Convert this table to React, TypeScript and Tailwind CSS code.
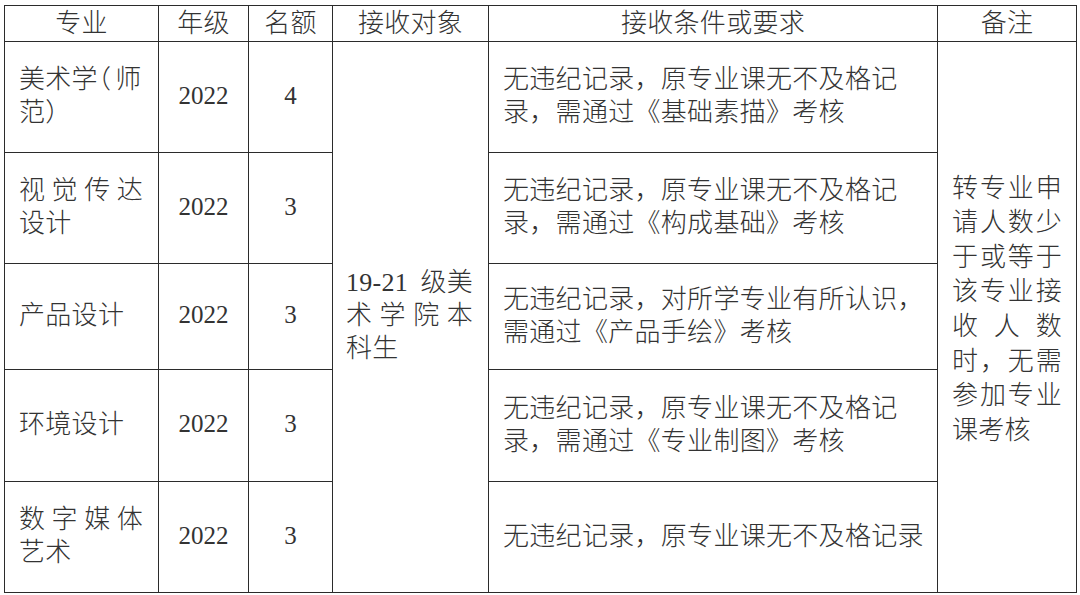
import React from "react";

type Ln = { t: string | string[]; j?: boolean };

const B = "border-r border-b border-[#2b2b2b]";

function Line({ l }: { l: Ln }) {
  if (l.j) {
    const toks = Array.isArray(l.t) ? l.t : Array.from(l.t);
    return (
      <div className="flex justify-between whitespace-nowrap">
        {toks.map((c, i) => (
          <span key={i}>{c}</span>
        ))}
      </div>
    );
  }
  return <div className="whitespace-nowrap">{Array.isArray(l.t) ? l.t.join("") : l.t}</div>;
}

function Lines({ lines }: { lines: Ln[] }) {
  return (
    <>
      {lines.map((l, i) => (
        <Line key={i} l={l} />
      ))}
    </>
  );
}

const rows: { major: React.ReactNode; year: string; n: string; cond: Ln[] }[] = [
  {
    major: (
      <>
        <div className="whitespace-nowrap">
          美术学<span className="[font-feature-settings:'halt'] mr-[4px]">（</span>师
        </div>
        <div className="whitespace-nowrap">范）</div>
      </>
    ),
    year: "2022",
    n: "4",
    cond: [{ t: "无违纪记录，原专业课无不及格记" }, { t: "录，需通过《基础素描》考核" }],
  },
  {
    major: <Lines lines={[{ t: "视觉传达", j: true }, { t: "设计" }]} />,
    year: "2022",
    n: "3",
    cond: [{ t: "无违纪记录，原专业课无不及格记" }, { t: "录，需通过《构成基础》考核" }],
  },
  {
    major: <Lines lines={[{ t: "产品设计" }]} />,
    year: "2022",
    n: "3",
    cond: [{ t: "无违纪记录，对所学专业有所认识，" }, { t: "需通过《产品手绘》考核" }],
  },
  {
    major: <Lines lines={[{ t: "环境设计" }]} />,
    year: "2022",
    n: "3",
    cond: [{ t: "无违纪记录，原专业课无不及格记" }, { t: "录，需通过《专业制图》考核" }],
  },
  {
    major: <Lines lines={[{ t: "数字媒体", j: true }, { t: "艺术" }]} />,
    year: "2022",
    n: "3",
    cond: [{ t: "无违纪记录，原专业课无不及格记录" }],
  },
];

const target: Ln[] = [{ t: ["19-21", "级美"], j: true }, { t: "术学院本", j: true }, { t: "科生" }];

const note: Ln[] = [
  { t: "转专业申", j: true },
  { t: "请人数少", j: true },
  { t: "于或等于", j: true },
  { t: "该专业接", j: true },
  { t: "收人数", j: true },
  { t: "时，无需", j: true },
  { t: "参加专业", j: true },
  { t: "课考核" },
];

const headers = ["专业", "年级", "名额", "接收对象", "接收条件或要求", "备注"];

export default function App() {
  return (
    <div className="w-[1080px] h-[595px] bg-white pt-[5px] pl-[4px] overflow-hidden text-[#333333] font-light text-[26px] leading-[33px] tracking-[0.3px] [font-family:'Liberation_Serif','Noto_Sans_CJK_SC',serif]">
      <div className="grid w-max grid-cols-[154px_90px_84px_156px_449px_139px] grid-rows-[36px_111px_111px_106px_112px_111px] border-l border-t border-[#2b2b2b]">
        {headers.map((h) => (
          <div key={h} className={`${B} flex items-center justify-center`}>
            {h}
          </div>
        ))}
        {rows.map((r, i) => (
          <React.Fragment key={i}>
            <div className={`${B} flex flex-col justify-center pl-[14px] pr-[15px] pb-[3px]`}>{r.major}</div>
            <div className={`${B} flex items-center justify-center pb-[4px] text-[25px] tracking-normal`}>{r.year}</div>
            <div className={`${B} flex items-center justify-center pb-[4px] text-[25px] tracking-normal`}>{r.n}</div>
            {i === 0 && (
              <div className={`${B} row-span-5 flex flex-col justify-center pl-[13px] pr-[15px] pb-[4px]`}>
                <Lines lines={target} />
              </div>
            )}
            <div className={`${B} flex flex-col justify-center pl-[14px] pb-[2px]`}>
              <Lines lines={r.cond} />
            </div>
            {i === 0 && (
              <div className={`${B} row-span-5 flex flex-col justify-center pl-[14px] pr-[14px] pb-[14px] leading-[34.6px]`}>
                <Lines lines={note} />
              </div>
            )}
          </React.Fragment>
        ))}
      </div>
    </div>
  );
}
